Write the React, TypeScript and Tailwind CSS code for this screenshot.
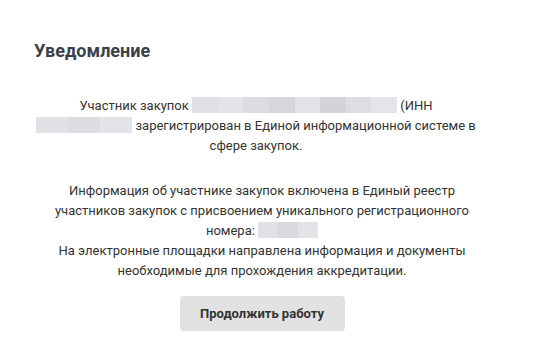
import React from 'react'

function Blur({ w, segs }: { w: number; segs: string[] }) {
  // blurred-out personal data placeholder
  return (
    <span className="inline-flex h-4 align-[-3px] overflow-hidden" style={{ width: w }}>
      {segs.map((c, i) => (
        <span key={i} className="h-full flex-1" style={{ backgroundColor: c }} />
      ))}
    </span>
  )
}

export default function App() {
  return (
    <div className="w-[538px] h-[353px] bg-white font-['Roboto',sans-serif] text-[#333] overflow-hidden">
      <div className="pt-[40px]">
        <h2 className="px-[34px] text-[18px] leading-[22px] font-bold text-[#3a3f4c]">Уведомление</h2>

        <div className="ml-[30px] w-[452px] mt-[34px] text-[13px] leading-[20px] text-center">
          <p>
            Участник закупок{' '}
            <Blur w={205} segs={['#dfe0e4', '#e3e4e8', '#dcdde1', '#d6d7db', '#e2e3e6', '#d3d4d8', '#dddee2', '#e4e5e8']} />{' '}
            (ИНН <Blur w={96} segs={['#e1e2e5', '#dcdde1', '#e3e4e7']} /> зарегистрирован в Единой информационной системе в
            сфере закупок.
          </p>

          <p className="mt-[25px] pl-[12px]">
            Информация об участнике закупок включена в Единый реестр участников закупок с присвоением уникального
            регистрационного номера: <Blur w={60} segs={['#e0e1e4', '#d8d9dd', '#e2e3e6']} />
            <br />
            На электронные площадки направлена информация и документы необходимые для прохождения аккредитации.
          </p>
        </div>

        <div className="mt-[15px] ml-[30px] w-[452px] pl-[12px] flex justify-center">
          <button className="h-[35px] w-[165px] rounded-[4px] bg-[#e2e2e2] text-[13px] font-bold text-[#333]">
            Продолжить работу
          </button>
        </div>
      </div>
    </div>
  )
}
